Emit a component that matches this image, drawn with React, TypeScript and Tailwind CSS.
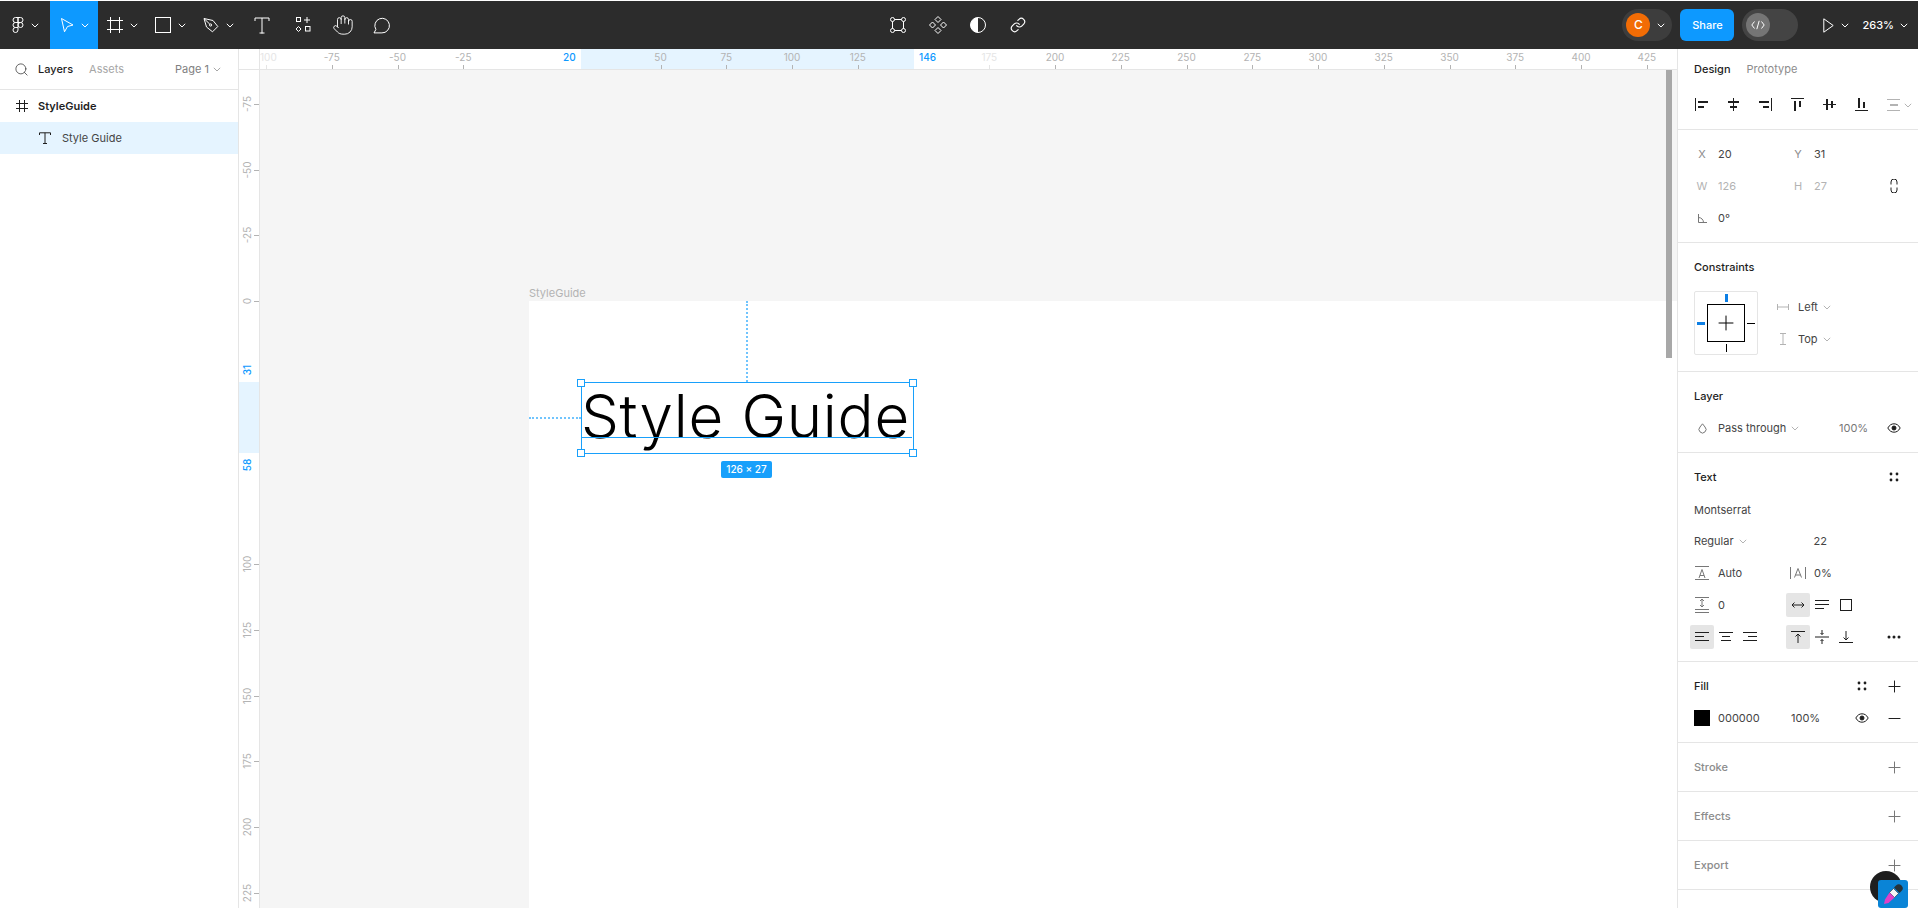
import React from "react";
import { Hand, Link as LinkIcon, Minus, Plus, Search } from "lucide-react";

type P = { w: number; h: number; children: React.ReactNode; className?: string };
const Ic = ({ w, h, children, className }: P) => (
  <svg width={w} height={h} viewBox={`0 0 ${w} ${h}`} fill="none" stroke="currentColor" strokeWidth={1} className={`shrink-0 ${className ?? ""}`}>
    {children}
  </svg>
);
const Chev = ({ className }: { className?: string }) => (
  <Ic w={8} h={5} className={className}>
    <path d="M.8.8 4 4 7.2.8" />
  </Ic>
);

const Tool = ({ w, chevron, active, children }: { w: string; chevron?: boolean; active?: boolean; children: React.ReactNode }) => (
  <div className={`flex h-full items-center justify-center gap-[7px] text-white ${w} ${active ? "bg-[#0d99ff]" : ""}`}>
    {children}
    {chevron && <Chev />}
  </div>
);

const Toolbar = () => (
  <header className="flex h-[48px] shrink-0 items-center bg-[#2c2c2c]">
    <div className="flex h-full w-[878px] items-center">
      <Tool w="w-[50px]" chevron>
        <Ic w={12} h={16}>
          <path d="M6 .5H3.500a2.500 2.500 0 0 0 0 5H6z" />
          <path d="M6 .5h2.500a2.500 2.500 0 0 1 0 5H6z" />
          <path d="M6 5.500H3.500a2.500 2.500 0 0 0 0 5H6z" />
          <circle cx="8.500" cy="8" r="2.500" />
          <path d="M3.500 10.500H6V13a2.500 2.500 0 1 1-2.500-2.500z" />
        </Ic>
      </Tool>
      <Tool w="w-[48px]" chevron active>
        <Ic w={14} h={16}>
          <path d="M1.500 1.500 13 8 7.500 9.500 4.500 14.800z" />
        </Ic>
      </Tool>
      <Tool w="w-[48px]" chevron>
        <Ic w={16} h={16}>
          <path d="M3.500 0v16M12.500 0v16M0 3.500h16M0 12.500h16" />
        </Ic>
      </Tool>
      <Tool w="w-[48px]" chevron>
        <Ic w={16} h={16}>
          <rect x=".5" y=".5" width="15" height="15" />
        </Ic>
      </Tool>
      <Tool w="w-[48px]" chevron>
        <Ic w={16} h={16}>
          <path d="M1 1.500 10 3.500 14.800 9.500 9.500 14.800 3.500 10z" />
          <path d="M1 1.500 6.800 7.200" />
          <circle cx="7.600" cy="8" r="1.100" />
        </Ic>
      </Tool>
      <Tool w="w-[40px]">
        <Ic w={16} h={17}>
          <path d="M1 4V1h14v3M8 1v15.500M5.500 16h5" />
        </Ic>
      </Tool>
      <Tool w="w-[41px]">
        <Ic w={16} h={16}>
          <rect x="1.500" y=".5" width="4" height="4" />
          <path d="M12 0v6M9 3h6" />
          <path d="M3.500 9.500 6 12l-2.500 2.500L1 12z" />
          <rect x="10.500" y="9.500" width="4.500" height="4.500" />
        </Ic>
      </Tool>
      <Tool w="w-[39px]">
        <Hand size={22} strokeWidth={1} />
      </Tool>
      <Tool w="w-[39px]">
        <Ic w={18} h={17}>
          <path d="M1 16 2.900 12.400A7.300 7.300 0 1 1 8.900 15.900H1z" />
        </Ic>
      </Tool>
    </div>
    <div className="flex h-full w-[160px] items-center text-white">
      <div className="flex w-10 justify-center">
        <Ic w={16} h={16}>
          <rect x="2.500" y="2.500" width="11" height="11" />
          <circle cx="2.500" cy="2.500" r="2" fill="#2c2c2c" />
          <circle cx="13.500" cy="2.500" r="2" fill="#2c2c2c" />
          <circle cx="2.500" cy="13.500" r="2" fill="#2c2c2c" />
          <circle cx="13.500" cy="13.500" r="2" fill="#2c2c2c" />
        </Ic>
      </div>
      <div className="flex w-10 justify-center">
        <Ic w={20} h={20}>
          <path d="M10 1.500 13 4.500 10 7.500 7 4.500z" />
          <path d="M10 12.500 13 15.500 10 18.500 7 15.500z" />
          <path d="M4.500 7 7.500 10 4.500 13 1.500 10z" />
          <path d="M15.500 7 18.500 10 15.500 13 12.500 10z" />
        </Ic>
      </div>
      <div className="flex w-10 justify-center">
        <Ic w={16} h={16}>
          <circle cx="8" cy="8" r="7.500" />
          <path d="M8 .5a7.500 7.500 0 0 0 0 15z" fill="currentColor" stroke="none" />
        </Ic>
      </div>
      <div className="flex w-10 justify-center">
        <LinkIcon size={16} strokeWidth={1.7} />
      </div>
    </div>
    <div className="flex h-full flex-1 items-center justify-end pr-[10px] text-white">
      <div className="flex h-8 w-[50px] items-center gap-[7px] rounded-full bg-[#3d3d3d] pl-1">
        <div className="flex h-6 w-6 items-center justify-center rounded-full bg-[#f26c05] text-[12px] font-medium">C</div>
        <Chev />
      </div>
      <div className="ml-2 flex h-8 w-[54px] items-center justify-center rounded-[6px] bg-[#0d99ff] text-[11px] font-medium">Share</div>
      <div className="ml-2 flex h-8 w-[56px] items-center rounded-full bg-[#444444] pl-1">
        <div className="flex h-6 w-6 items-center justify-center rounded-full bg-[#757575]">
          <Ic w={14} h={10}>
            <path d="M3.500 1.500 .8 5l2.700 3.500M10.500 1.500 13.200 5l-2.700 3.500M8.200 .8 5.800 9.200" />
          </Ic>
        </div>
      </div>
      <div className="ml-[25px] flex items-center gap-[7px]">
        <Ic w={11} h={15}>
          <path d="M.8.800 10.200 7.500.8 14.200z" />
        </Ic>
        <Chev />
      </div>
      <div className="ml-[13px] flex items-center gap-[6px] text-[11px] font-medium">
        263%
        <Chev />
      </div>
    </div>
  </header>
);

const LeftPanel = () => (
  <aside className="w-[239px] shrink-0 border-r border-[#e5e5e5] bg-white text-[11px] text-[#1e1e1e]">
    <div className="flex h-[41px] items-center border-b border-[#e5e5e5] pr-[17px]">
      <div className="flex w-[38px] justify-center pl-[4px] text-[#333]">
        <Search size={15} strokeWidth={1.2} />
      </div>
      <span className="font-medium">Layers</span>
      <span className="ml-4 text-[#a6a6a6]">Assets</span>
      <span className="ml-auto text-[#808080]">Page 1</span>
      <Chev className="ml-[4px] text-[#a6a6a6]" />
    </div>
    <div className="flex h-8 items-center font-semibold">
      <div className="flex w-[38px] justify-center pl-[5px]">
        <Ic w={12} h={12}>
          <path d="M3.500 0v12M8.500 0v12M0 3.500h12M0 8.500h12" />
        </Ic>
      </div>
      StyleGuide
    </div>
    <div className="flex h-8 items-center bg-[#e5f4ff] text-[#444]">
      <div className="flex w-[62px] justify-center pl-[28px] text-[#1e1e1e]">
        <Ic w={12} h={12}>
          <path d="M.5 3V.8h11V3M6 .8v10.700M4 11.500h4" />
        </Ic>
      </div>
      Style Guide
    </div>
  </aside>
);

const hLabels = [-75, -50, -25, 50, 75, 100, 125, 200, 225, 250, 275, 300, 325, 350, 375, 400, 425];
const vLabels = [-75, -50, -25, 0, 100, 125, 150, 175, 200, 225];
const X0 = 269; // frame origin within the canvas
const Y0 = 231;
const S = 2.63;

const TopRuler = () => (
  <div className="relative h-full flex-1 overflow-hidden text-[10px] text-[#b3b3b3]">
    <div className="absolute top-0 bottom-0 left-[321px] w-[333px] bg-[#e5f4ff]" />
    {hLabels.map((v) => (
      <div key={v} className="absolute top-0 h-full" style={{ left: X0 + S * v }}>
        <span className="absolute top-[1px] -translate-x-1/2 leading-[14px]">{v}</span>
        <span className="absolute top-[16px] h-[4px] w-px bg-[#b3b3b3]" />
      </div>
    ))}
    <span className="absolute top-[1px] left-0 leading-[14px] text-[#e5e5e5]">100</span>
    <span className="absolute top-[16px] left-[6px] h-[4px] w-px bg-[#e5e5e5]" />
    <div className="absolute top-0 h-full text-[#e5e5e5]" style={{ left: X0 + S * 175 }}>
      <span className="absolute top-[1px] -translate-x-1/2 leading-[14px]">175</span>
      <span className="absolute top-[16px] h-[4px] w-px bg-[#e5e5e5]" />
    </div>
    <span className="absolute top-[1px] left-[303px] font-medium leading-[14px] text-[#0d99ff]">20</span>
    <span className="absolute top-[1px] left-[659px] font-medium leading-[14px] text-[#0d99ff]">146</span>
  </div>
);

const LeftRuler = () => (
  <div className="relative w-[21px] shrink-0 overflow-hidden border-r border-[#e5e5e5] bg-white text-[10px] text-[#b3b3b3]">
    <div className="absolute top-[312px] left-0 h-[71px] w-full bg-[#e5f4ff]" />
    {vLabels.map((v) => (
      <div key={v} className="absolute left-0 w-full" style={{ top: Y0 + S * v }}>
        <span className="absolute top-0 left-[8px] -translate-x-1/2 -translate-y-1/2 -rotate-90 whitespace-nowrap leading-[14px]">{v}</span>
        <span className="absolute top-0 left-[15px] h-px w-[5px] bg-[#b3b3b3]" />
      </div>
    ))}
    <span className="absolute top-[300px] left-[8px] -translate-x-1/2 -translate-y-1/2 -rotate-90 font-medium leading-[14px] text-[#0d99ff]">31</span>
    <span className="absolute top-[395px] left-[8px] -translate-x-1/2 -translate-y-1/2 -rotate-90 font-medium leading-[14px] text-[#0d99ff]">58</span>
  </div>
);

const Handle = ({ className }: { className: string }) => (
  <span className={`absolute h-2 w-2 border border-[#18a0fb] bg-white ${className}`} />
);

const Canvas = () => (
  <div className="relative flex-1 overflow-hidden bg-[#f5f5f5]">
    <div className="absolute top-[231px] right-0 bottom-0 left-[269px] bg-white" />
    <span className="absolute top-[216px] left-[269px] text-[11px] leading-[14px] text-[#b3b3b3]">StyleGuide</span>
    <div className="absolute top-[231px] left-[486px] h-[81px] border-l-2 border-dotted border-[#70c4fd]" />
    <div className="absolute top-[347px] left-[269px] w-[52px] border-t-2 border-dotted border-[#70c4fd]" />
    <div className="absolute top-[312px] left-[321px] h-[72px] w-[333px] border border-[#18a0fb]">
      <span className="absolute top-[-2px] left-[-1px] font-['Inter'] text-[60px] font-light leading-[70px] tracking-[0.7px] whitespace-nowrap text-black">Style Guide</span>
      <span className="absolute top-[54px] left-0 h-px w-[330px] bg-[#18a0fb]" />
      <Handle className="-top-[4px] -left-[5px]" />
      <Handle className="-top-[4px] -right-[4px]" />
      <Handle className="-bottom-[4px] -left-[5px]" />
      <Handle className="-bottom-[4px] -right-[4px]" />
    </div>
    <div className="absolute top-[391px] left-[461px] flex h-[17px] w-[51px] items-center justify-center rounded-[2px] bg-[#18a0fb] text-[10px] font-medium text-white">126 × 27</div>
    <div className="absolute top-0 right-[5px] h-[288px] w-[6px] bg-[#a8a8a8]" />
  </div>
);

/* Right panel */
const Section = ({ children, className }: { children: React.ReactNode; className?: string }) => (
  <section className={`border-b border-[#e5e5e5] pt-2 pb-2 ${className ?? ""}`}>{children}</section>
);
const Row = ({ children }: { children: React.ReactNode }) => (
  <div className="grid h-8 grid-cols-[repeat(9,24px)] items-center pl-3">{children}</div>
);
const Cell = ({ className, children }: { className?: string; children?: React.ReactNode }) => (
  <div className={`flex h-6 items-center justify-center ${className ?? ""}`}>{children}</div>
);
const Title = ({ children, muted, right }: { children: React.ReactNode; muted?: boolean; right?: React.ReactNode }) => (
  <div className={`flex h-8 items-center justify-between pr-2 pl-4 font-medium ${muted ? "text-[#8c8c8c]" : "text-[#1e1e1e]"}`}>
    <span>{children}</span>
    <div className="flex">{right}</div>
  </div>
);
const Slot = ({ children, className }: { children?: React.ReactNode; className?: string }) => (
  <div className={`flex w-8 items-center justify-center ${className ?? ""}`}>{children}</div>
);
const Dots = () => (
  <Ic w={10} h={10}>
    <g fill="currentColor" stroke="none">
      <circle cx="2" cy="2" r="1.400" />
      <circle cx="8" cy="2" r="1.400" />
      <circle cx="2" cy="8" r="1.400" />
      <circle cx="8" cy="8" r="1.400" />
    </g>
  </Ic>
);
const PlusIcon = ({ muted }: { muted?: boolean }) => (
  <Plus size={19} strokeWidth={1.26} className={muted ? "text-[#777]" : "text-[#1e1e1e]"} />
);
const EyeIcon = () => (
  <Ic w={14} h={10}>
    <path d="M.8 5C2.500 2 4.500 .8 7 .8S11.500 2 13.200 5C11.500 8 9.500 9.200 7 9.200S2.500 8 .8 5z" />
    <circle cx="7" cy="5" r="2" fill="currentColor" />
  </Ic>
);
const Rects = ({ rects, className }: { rects: number[][]; className?: string }) => (
  <svg width={14} height={14} viewBox="0 0 14 14" className={`shrink-0 ${className ?? ""}`} fill="currentColor">
    {rects.map((r, i) => (
      <rect key={i} x={r[0]} y={r[1]} width={r[2]} height={r[3]} />
    ))}
  </svg>
);

const alignIcons: number[][][] = [
  [[0, 0, 1, 13], [3, 3, 10, 2], [3, 8, 6, 2]],
  [[6, 0, 1, 13], [1, 3, 11, 2], [3, 8, 7, 2]],
  [[12, 0, 1, 13], [0, 3, 10, 2], [4, 8, 6, 2]],
  [[0, 0, 13, 1], [3, 3, 2, 10], [8, 3, 2, 6]],
  [[0, 6, 13, 1], [3, 1, 2, 11], [8, 3, 2, 7]],
  [[0, 12, 13, 1], [3, 0, 2, 10], [8, 4, 2, 6]],
];

const RightPanel = () => (
  <aside className="relative w-[241px] shrink-0 overflow-hidden border-l border-[#e5e5e5] bg-white text-[11px] text-[#444]">
    <section className="h-[81px] border-b border-[#e5e5e5]">
      <div className="flex h-10 items-center gap-[16px] pl-4">
        <span className="font-medium text-[#1e1e1e]">Design</span>
        <span className="text-[#8c8c8c]">Prototype</span>
      </div>
      <div className="flex h-8 items-center pl-[17px] text-[#1e1e1e]">
        {alignIcons.map((r, i) => (
          <div key={i} className="w-[32px]">
            <Rects rects={r} />
          </div>
        ))}
        <div className="flex items-center gap-[3px] text-[#b3b3b3]">
          <Rects rects={[[0, 1, 13, 1], [3, 6, 8, 2], [0, 12, 13, 1]]} />
          <Chev />
        </div>
      </div>
    </section>
    <Section>
      <Row>
        <Cell className="text-[#8c8c8c]">X</Cell>
        <Cell className="col-span-2 !justify-start pl-1">20</Cell>
        <Cell />
        <Cell className="text-[#8c8c8c]">Y</Cell>
        <Cell className="col-span-2 !justify-start pl-1">31</Cell>
      </Row>
      <Row>
        <Cell className="text-[#b3b3b3]">W</Cell>
        <Cell className="col-span-2 !justify-start pl-1 text-[#b3b3b3]">126</Cell>
        <Cell />
        <Cell className="text-[#b3b3b3]">H</Cell>
        <Cell className="col-span-2 !justify-start pl-1 text-[#b3b3b3]">27</Cell>
        <Cell />
        <Cell className="text-[#1e1e1e]">
          <Ic w={8} h={14}>
            <path d="M1 5.500V3a3 3 0 0 1 6 0v2.500M1 8.500V11a3 3 0 0 0 6 0V8.500" />
          </Ic>
        </Cell>
      </Row>
      <Row>
        <Cell className="text-[#777]">
          <Ic w={9} h={9}>
            <path d="M.5 0v8.500H9M.5 3.500A5 5 0 0 1 5.500 8.500" />
          </Ic>
        </Cell>
        <Cell className="col-span-2 !justify-start pl-1">0°</Cell>
      </Row>
    </Section>
    <section className="border-b border-[#e5e5e5] pt-2 pb-4">
      <Title>Constraints</Title>
      <div className="mt-2 flex pl-4">
        <div className="relative h-16 w-16 rounded-[2px] border border-[#e5e5e5]">
          <div className="absolute top-[12px] left-[12px] flex h-[38px] w-[38px] items-center justify-center border border-black text-black">
            <Plus size={24} strokeWidth={1} />
          </div>
          <span className="absolute top-[2px] left-[30px] h-2 w-[3px] bg-[#0d7fe5]" />
          <span className="absolute top-[30px] left-[2px] h-[3px] w-2 bg-[#0d7fe5]" />
          <span className="absolute top-[31px] right-[2px] h-px w-2 bg-black" />
          <span className="absolute bottom-[2px] left-[31px] h-2 w-px bg-black" />
        </div>
        <div className="ml-[13px] w-[100px]">
          <div className="flex h-8 items-center">
            <div className="flex w-6 justify-center text-[#b3b3b3]">
              <Ic w={12} h={6}>
                <path d="M.5 0v6M11.500 0v6M.5 3h11" />
              </Ic>
            </div>
            <span className="ml-[3px]">Left</span>
            <Chev className="ml-[5px] text-[#b3b3b3]" />
          </div>
          <div className="flex h-8 items-center">
            <div className="flex w-6 justify-center text-[#b3b3b3]">
              <Ic w={6} h={12}>
                <path d="M0 .5h6M0 11.500h6M3 .5v11" />
              </Ic>
            </div>
            <span className="ml-[3px]">Top</span>
            <Chev className="ml-[5px] text-[#b3b3b3]" />
          </div>
        </div>
      </div>
    </section>
    <Section>
      <Title>Layer</Title>
      <Row>
        <Cell className="text-[#777]">
          <Ic w={9} h={11}>
            <path d="M4.500.8 7 4a3.500 3.500 0 1 1-5 0z" />
          </Ic>
        </Cell>
        <Cell className="col-span-4 !justify-start pl-1">
          Pass through
          <Chev className="ml-[5px] text-[#b3b3b3]" />
        </Cell>
        <Cell className="col-span-2 col-start-7 !justify-start pl-[5px] text-[#777]">100%</Cell>
        <Cell className="col-start-9 text-[#1e1e1e]">
          <EyeIcon />
        </Cell>
      </Row>
    </Section>
    <Section>
      <Title right={<Slot className="text-[#1e1e1e]"><Dots /></Slot>}>Text</Title>
      <div className="flex h-8 items-center pt-[2px] pl-4">Montserrat</div>
      <div className="flex h-8 items-center pl-4">
        Regular
        <Chev className="ml-[5px] text-[#b3b3b3]" />
        <span className="ml-[67px]">22</span>
      </div>
      <Row>
        <Cell className="text-[#777]">
          <Ic w={14} h={14}>
            <path d="M0 .5h14M0 13.500h14M4 12 7 3.500 10 12M5 9.500h4" />
          </Ic>
        </Cell>
        <Cell className="col-span-3 !justify-start pl-1">Auto</Cell>
        <Cell className="text-[#777]">
          <Ic w={16} h={12}>
            <path d="M.5 0v12M15.500 0v12M4.500 10.500 8 1.500l3.500 9M5.500 8h5" />
          </Ic>
        </Cell>
        <Cell className="col-span-2 !justify-start pl-1">0%</Cell>
      </Row>
      <Row>
        <Cell className="text-[#777]">
          <Ic w={14} h={16}>
            <path d="M0 .5h14M0 12.500h14M0 15.500h14M7 2v8M5 4l2-2 2 2M5 8l2 2 2-2" />
          </Ic>
        </Cell>
        <Cell className="col-span-3 !justify-start pl-1">0</Cell>
        <Cell className="rounded-[2px] bg-[#e5e5e5] text-[#1e1e1e]">
          <Ic w={14} h={8}>
            <path d="M1 4h12M3.500 1.500 1 4l2.500 2.500M10.500 1.500 13 4l-2.500 2.500" />
          </Ic>
        </Cell>
        <Cell className="text-[#1e1e1e]">
          <Ic w={14} h={10}>
            <path d="M0 .5h14M0 4.500h14M0 8.500h9" />
          </Ic>
        </Cell>
        <Cell className="text-[#1e1e1e]">
          <Ic w={12} h={12}>
            <rect x=".5" y=".5" width="11" height="11" />
          </Ic>
        </Cell>
      </Row>
      <Row>
        <Cell className="rounded-[2px] bg-[#e5e5e5] text-[#1e1e1e]">
          <Ic w={14} h={10}>
            <path d="M0 .5h14M0 4.500h9M0 8.500h14" />
          </Ic>
        </Cell>
        <Cell className="text-[#1e1e1e]">
          <Ic w={14} h={10}>
            <path d="M0 .5h14M3 4.500h8M2 8.500h10" />
          </Ic>
        </Cell>
        <Cell className="text-[#1e1e1e]">
          <Ic w={14} h={10}>
            <path d="M0 .5h14M5 4.500h9M0 8.500h14" />
          </Ic>
        </Cell>
        <Cell />
        <Cell className="rounded-[2px] bg-[#e5e5e5] text-[#1e1e1e]">
          <Ic w={14} h={12}>
            <path d="M0 .5h14M7 3v9M4.500 5.500 7 3l2.500 2.500" />
          </Ic>
        </Cell>
        <Cell className="text-[#1e1e1e]">
          <Ic w={14} h={14}>
            <path d="M0 7h14M7 0v4.500M5.500 3 7 4.500 8.500 3M7 14V9.500M5.500 11 7 9.500 8.500 11" />
          </Ic>
        </Cell>
        <Cell className="text-[#1e1e1e]">
          <Ic w={14} h={12}>
            <path d="M0 11.500h14M7 0v9M4.500 6.500 7 9l2.500-2.500" />
          </Ic>
        </Cell>
        <Cell />
        <Cell className="text-[#1e1e1e]">
          <Ic w={14} h={4}>
            <g fill="currentColor" stroke="none">
              <circle cx="2" cy="2" r="1.500" />
              <circle cx="7" cy="2" r="1.500" />
              <circle cx="12" cy="2" r="1.500" />
            </g>
          </Ic>
        </Cell>
      </Row>
    </Section>
    <Section>
      <Title right={<><Slot className="text-[#1e1e1e]"><Dots /></Slot><Slot><PlusIcon /></Slot></>}>Fill</Title>
      <div className="flex h-8 items-center pr-2 pl-4">
        <span className="h-4 w-4 bg-black" />
        <span className="ml-2 w-[73px]">000000</span>
        <span className="flex-1">100%</span>
        <Slot className="text-[#1e1e1e]"><EyeIcon /></Slot>
        <Slot className="text-[#1e1e1e]"><Minus size={19} strokeWidth={1.26} /></Slot>
      </div>
    </Section>
    <Section><Title muted right={<Slot><PlusIcon muted /></Slot>}>Stroke</Title></Section>
    <Section><Title muted right={<Slot><PlusIcon muted /></Slot>}>Effects</Title></Section>
    <Section><Title muted right={<Slot><PlusIcon muted /></Slot>}>Export</Title></Section>
    <div className="absolute top-[822px] left-[192px] h-8 w-8 rounded-full bg-[#1e1e1e]" />
    <div className="absolute top-[831px] left-[200px] flex h-[28px] w-[30px] items-center justify-center rounded-[3px] bg-[#0a84d6]">
      <svg width={24} height={24} viewBox="0 0 24 24">
        <path d="M15 3.500a2.800 2.800 0 0 1 5.500 5.500l-2 2-5.500-5.500z" fill="#263238" />
        <path d="M12.500 6.500 17.500 11.500l-4 4-5-5z" fill="#f5f5f5" stroke="#263238" strokeWidth=".6" />
        <path d="M8.500 10.500 13.500 15.500 7.500 21 3 22l1-4.500z" fill="#e040c8" />
      </svg>
    </div>
  </aside>
);

export default function App() {
  return (
    <div className="flex h-[908px] w-[1918px] flex-col overflow-hidden bg-white pt-px font-['Inter',sans-serif]">
      <Toolbar />
      <main className="flex min-h-0 flex-1">
        <LeftPanel />
        <div className="flex min-w-0 flex-1 flex-col">
          <div className="flex h-[21px] shrink-0 border-b border-[#e5e5e5] bg-white">
            <div className="w-[21px] shrink-0 border-r border-[#e5e5e5]" />
            <TopRuler />
          </div>
          <div className="flex min-h-0 flex-1">
            <LeftRuler />
            <Canvas />
          </div>
        </div>
        <RightPanel />
      </main>
    </div>
  );
}
